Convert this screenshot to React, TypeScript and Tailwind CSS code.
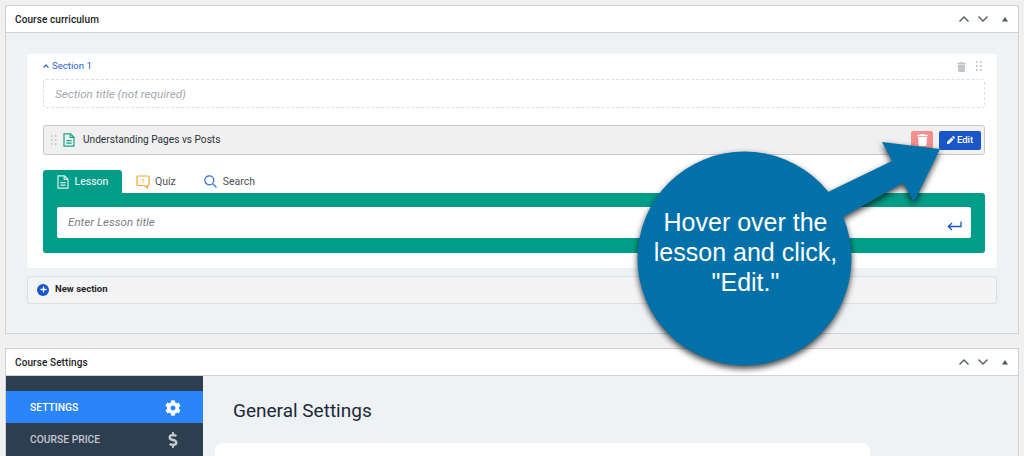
import { FaCog, FaDollarSign, FaPlus, FaTrash, FaPen } from "react-icons/fa";

const roboto = "font-['Roboto',sans-serif]";

function Controls() {
  return (
    <div className="flex items-center text-[#50575e]">
      <svg width="10" height="6" viewBox="0 0 10 6" fill="none" stroke="currentColor" strokeWidth="1.3"><path d="M.5 5.500L5 1l4.500 4.500" /></svg>
      <svg className="ml-[9px]" width="10" height="6" viewBox="0 0 10 6" fill="none" stroke="currentColor" strokeWidth="1.3"><path d="M.5.500L5 5l4.500-4.500" /></svg>
      <svg className="ml-[14px] mr-[10px]" width="6" height="5" viewBox="0 0 6 5" fill="currentColor"><path d="M3 0l3 4.600H0z" /></svg>
    </div>
  );
}

function PanelHeader({ title }: { title: string }) {
  return (
    <div className="flex h-[27px] items-center justify-between border-b border-[#d0d2d5] bg-white pl-[9px] pr-0">
      <span className="pt-[1px] text-[10px] font-medium leading-none tracking-[0.1px] text-[#1d2327]">{title}</span>
      <Controls />
    </div>
  );
}

function Grip({ className }: { className: string }) {
  return (
    <svg className={className} width="6" height="11" viewBox="0 0 6 11" fill="currentColor">
      {[0, 4, 8].map((y) => (
        <g key={y}>
          <rect x="0" y={y} width="1.500" height="2" />
          <rect x="4" y={y} width="1.500" height="2" />
        </g>
      ))}
    </svg>
  );
}

function DocIcon({ className }: { className: string }) {
  return (
    <svg className={className} width="12" height="14" viewBox="0 0 12 14" fill="none" stroke="currentColor" strokeWidth="1.2">
      <path d="M1 .8h6.500L11 4.200v9H1z" />
      <path d="M7.200 1v3.400H11M3.400 7.600h5.200M3.400 10.200h5.200" />
    </svg>
  );
}

export default function App() {
  return (
    <div className={`${roboto} relative h-[456px] w-[1024px] overflow-hidden bg-[#f0f0f1]`}>
      <div className="flex flex-col gap-[14px] px-[5px] pt-[5px]">
        {/* Course curriculum */}
        <section className="h-[329px] border border-[#cfd1d4] bg-[#eff2f5]">
          <PanelHeader title="Course curriculum" />
          <div className="px-[21px] pt-[21px]">
            <div className="h-[214px] rounded-[4px] bg-white pl-[16px] pr-[12px] pt-[5px]">
              <div className="flex h-[15px] items-center justify-between">
                <div className="flex items-center gap-[3px] text-[9.6px] text-[#2b5fc7]">
                  <svg width="6" height="4" viewBox="0 0 6 4" fill="none" stroke="currentColor" strokeWidth="1.2"><path d="M.5 3.500L3 1l2.500 2.500" /></svg>
                  <span>Section 1</span>
                </div>
                <div className="flex items-center text-[#c3c6c9]">
                  <FaTrash className="h-[10px] w-[9px]" />
                  <Grip className="ml-[10px] mr-[3px]" />
                </div>
              </div>
              <div className="mt-[5px] flex h-[29px] items-center rounded-[3px] border border-dashed border-[#dcdfe2] pl-[11px] pt-[2px] text-[11.7px] italic text-[#a3a8ad]">
                Section title (not required)
              </div>
              <div className="mt-[17px] flex h-[30px] items-center rounded-[3px] border border-[#c6c8ca] bg-[#f0f0f0] pl-[7px] pr-[3px]">
                <Grip className="text-[#c8cacc]" />
                <DocIcon className="ml-[6px] text-[#13a58c]" />
                <span className="ml-[8px] text-[10.15px] text-[#2c3338]">Understanding Pages vs Posts</span>
                <div className="ml-auto flex items-center gap-[6px]">
                  <div className="flex h-[19px] w-[22px] items-center justify-center rounded-[2px] bg-[#f58e8e] text-white">
                    <FaTrash className="h-[12px] w-[11px]" />
                  </div>
                  <div className="flex h-[19px] w-[42px] items-center justify-center gap-[2px] rounded-[2px] bg-[#1a55c9] text-[9.5px] font-medium text-white">
                    <FaPen className="h-[8px] w-[8px]" />
                    <span>Edit</span>
                  </div>
                </div>
              </div>
              <div className="mt-[15px] flex h-[23px] items-stretch text-[10.5px]">
                <div className="flex w-[79px] items-center justify-center gap-[6px] rounded-t-[3px] bg-[#009e88] text-white">
                  <DocIcon className="text-[#d7f3ee]" />
                  <span>Lesson</span>
                </div>
                <div className="ml-[14px] flex items-center gap-[5px] text-[#4b5157]">
                  <svg width="14" height="14" viewBox="0 0 14 14" fill="none" stroke="#f2a72e" strokeWidth="1.2">
                    <path d="M2 1h10a1 1 0 011 1v7.500a1 1 0 01-1 1h-1l.4 2.500L8 10.500H2a1 1 0 01-1-1V2a1 1 0 011-1z" />
                    <text x="7" y="8.500" fontSize="7" textAnchor="middle" fill="#f2a72e" stroke="none">?</text>
                  </svg>
                  <span>Quiz</span>
                </div>
                <div className="ml-[28px] flex items-center gap-[6px] text-[#4b5157]">
                  <svg width="13" height="13" viewBox="0 0 13 13" fill="none" stroke="#2b6fd6" strokeWidth="1.2">
                    <circle cx="5.300" cy="5.300" r="4.500" />
                    <path d="M8.600 8.600L12.500 12.500" />
                  </svg>
                  <span>Search</span>
                </div>
              </div>
              <div className="h-[60px] rounded-b-[3px] rounded-tr-[3px] bg-[#009e88] px-[14px] pt-[14px]">
                <div className="flex h-[31px] items-center justify-between rounded-[2px] bg-white pl-[11px] pr-[9px] pt-[1px] text-[11.6px] italic text-[#7b8085]">
                  <span>Enter Lesson title</span>
                  <svg className="mt-[6px]" width="15" height="10" viewBox="0 0 15 10" fill="none" stroke="#1a55c9" strokeWidth="1.3">
                    <path d="M14 .5v5H1.500M5 2L1.300 5.500 5 9" />
                  </svg>
                </div>
              </div>
            </div>
            <div className="mt-[8px] flex h-[28px] items-center gap-[6px] rounded-[3px] border border-[#dcdee0] bg-[#f4f4f5] pb-[1px] pl-[9px] text-[9.5px] font-bold text-[#23282d]">
              <span className="flex h-[12px] w-[12px] items-center justify-center rounded-full bg-[#1a55c9] text-white">
                <FaPlus className="h-[7px] w-[7px]" />
              </span>
              <span>New section</span>
            </div>
          </div>
        </section>

        {/* Course Settings */}
        <section className="h-[200px] border border-[#cfd1d4] bg-[#eff2f5]">
          <PanelHeader title="Course Settings" />
          <div className="flex">
            <div className="w-[197px] bg-[#2c3e50] pt-[15px]">
              <div className="flex h-[32px] items-center justify-between bg-[#2a85fb] pl-[24px] pr-[22px] pt-[1px] text-[10.3px] font-medium text-white">
                <span>SETTINGS</span>
                <FaCog className="h-[16px] w-[16px]" />
              </div>
              <div className="mt-[1px] flex h-[32px] items-center justify-between pl-[24px] pr-[25px] text-[10.3px] font-medium text-[#c4c8cc]">
                <span>COURSE PRICE</span>
                <FaDollarSign className="h-[16px] w-[10px]" />
              </div>
            </div>
            <div className="flex-1 pl-[12px] pt-[24px]">
              <h2 className="pl-[18px] text-[19px] font-normal leading-[22px] text-[#1d2838]">General Settings</h2>
              <div className="mt-[21px] h-[40px] w-[655px] rounded-[8px] bg-white" />
            </div>
          </div>
        </section>
      </div>

      {/* Callout overlay */}
      <svg className="absolute left-0 top-0 drop-shadow-[0_3px_3px_rgba(0,0,0,0.75)]" width="1024" height="456" fill="#0271aa">
        <path d="M828 192L892 161L882 142L940 149L914 202L903 183L843 217Z" />
        <circle cx="744.500" cy="258.500" r="107" />
      </svg>
      <div className="absolute left-[638px] top-[207px] w-[215px] text-center font-['Liberation_Sans',sans-serif] text-[25px] leading-[30px] text-white">
        Hover over the
        <br />
        lesson and click,
        <br />
        "Edit."
      </div>
    </div>
  );
}
